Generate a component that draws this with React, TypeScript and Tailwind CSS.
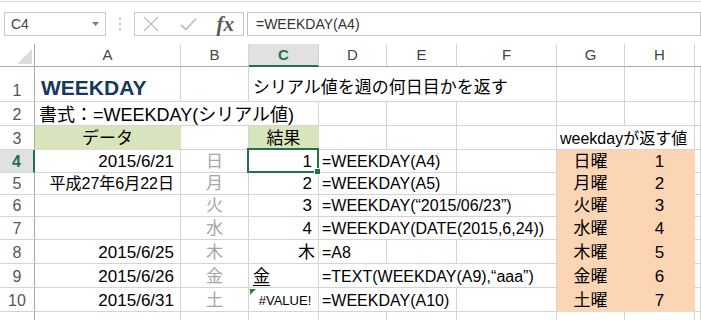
import type { ReactNode } from 'react';

type Fill = 'green' | 'orange';

function Cell({
  w,
  children,
  open,
  fill,
  className = '',
}: {
  w: string;
  children?: ReactNode;
  open?: boolean;
  fill?: Fill;
  className?: string;
}) {
  const tone =
    fill === 'green'
      ? 'bg-[#d8e4bc] border-[#d8e4bc]'
      : fill === 'orange'
        ? 'bg-[#fcd5b4] border-[#fcd5b4]'
        : 'border-[#d4d4d4]';
  return (
    <div
      className={`${w} relative flex h-full shrink-0 items-end whitespace-nowrap border-b text-[16px] leading-[20px] ${open ? 'z-10' : 'border-r'} ${tone} ${className}`}
    >
      {children}
    </div>
  );
}

function Row({ n, h, active, children }: { n?: number; h: string; active?: boolean; children: ReactNode }) {
  return (
    <div className={`flex ${h}`}>
      <div
        className={`flex w-[35px] shrink-0 items-end justify-center border-b border-b-[#d4d4d4] text-[16px] leading-[20px] ${
          active
            ? 'border-r-2 border-r-[#217346] bg-[#e1e1e1] font-bold text-[#217346]'
            : 'border-r border-r-[#ababab] text-[#555]'
        }`}
      >
        {n}
      </div>
      {children}
    </div>
  );
}

const day = 'justify-center text-[17px] text-[#a6a6a6]';
const num = 'justify-end pr-[6px] text-[17px]';

export default function App() {
  return (
    <div className="h-[320px] w-[701px] overflow-hidden bg-white font-['Liberation_Sans','Noto_Sans_CJK_JP',sans-serif] text-black">
      {/* formula bar */}
      <div className="h-[44px]">
        <div className="h-[1px]" />
        <div className="h-[1px] bg-[#d6d6d6]" />
        <div className="mt-[10px] flex h-[24px] items-stretch">
          <div className="ml-[4px] flex w-[103px] items-center justify-between border border-[#c6c6c6] pl-[6px] pr-[6px] text-[14px] text-[#444]">
            <span>C4</span>
            <svg width="7" height="4" viewBox="0 0 7 4">
              <path d="M0 0h7L3.5 4z" fill="#7a7a7a" />
            </svg>
          </div>
          <div className="flex w-[29px] flex-col items-center justify-center gap-[3px]">
            <span className="h-[2px] w-[2px] bg-[#c4c4c4]" />
            <span className="h-[2px] w-[2px] bg-[#c4c4c4]" />
            <span className="h-[2px] w-[2px] bg-[#c4c4c4]" />
          </div>
          <div className="flex w-[111px] items-center border border-[#c6c6c6]">
            <svg className="ml-[8px]" width="16" height="16" viewBox="0 0 16 16">
              <path d="M1 1L15 15M15 1L1 15" stroke="#c0c0c0" strokeWidth="1.4" />
            </svg>
            <svg className="ml-[21px]" width="17" height="14" viewBox="0 0 17 14">
              <path d="M1 8L6 12.5L16 1.5" stroke="#c0c0c0" strokeWidth="1.8" fill="none" />
            </svg>
            <span className="ml-[19px] font-['Liberation_Serif',serif] text-[21px] font-bold italic leading-none text-[#5a5a5a]">
              fx
            </span>
          </div>
          <div className="ml-[3px] flex w-[460px] items-center border border-[#c6c6c6] pl-[8px] text-[14px] text-[#333]">
            =WEEKDAY(A4)
          </div>
        </div>
      </div>

      {/* column headers */}
      <div className="flex h-[23px] text-[15px] leading-[20px] text-[#444]">
        <div className="flex w-[35px] shrink-0 items-end justify-end border-b border-r border-[#ababab] pb-[2px] pr-[2px]">
          <svg width="15" height="15" viewBox="0 0 15 15">
            <path d="M15 0V15H0z" fill="#dcdcdc" />
          </svg>
        </div>
        <div className="flex w-[146px] shrink-0 items-center justify-center border-b border-r border-b-[#ababab] border-r-[#d4d4d4]">A</div>
        <div className="flex w-[68px] shrink-0 items-center justify-center border-b border-r border-b-[#ababab] border-r-[#d4d4d4]">B</div>
        <div className="flex w-[70px] shrink-0 items-center justify-center border-b-2 border-r border-b-[#217346] border-r-[#d4d4d4] bg-[#e1e1e1] font-bold text-[#217346]">C</div>
        <div className="flex w-[68px] shrink-0 items-center justify-center border-b border-r border-b-[#ababab] border-r-[#d4d4d4]">D</div>
        <div className="flex w-[70px] shrink-0 items-center justify-center border-b border-r border-b-[#ababab] border-r-[#d4d4d4]">E</div>
        <div className="flex w-[100px] shrink-0 items-center justify-center border-b border-r border-b-[#ababab] border-r-[#d4d4d4]">F</div>
        <div className="flex w-[68px] shrink-0 items-center justify-center border-b border-r border-b-[#ababab] border-r-[#d4d4d4]">G</div>
        <div className="flex w-[70px] shrink-0 items-center justify-center border-b border-r border-b-[#ababab] border-r-[#d4d4d4]">H</div>
        <div className="flex-1 border-b border-[#ababab]" />
      </div>

      <Row n={1} h="h-[35px]">
        <Cell w="w-[146px]" className="pb-[3px] pl-[6px] text-[21px] font-bold text-[#17375e]">WEEKDAY</Cell>
        <Cell w="w-[68px]" />
        <Cell w="w-[70px]" open className="pb-[3px] pl-[4px] text-[17px]">
          <span>シリアル値を週の何日目かを返す</span>
        </Cell>
        <Cell w="w-[68px]" open />
        <Cell w="w-[70px]" open />
        <Cell w="w-[100px]" />
        <Cell w="w-[68px]" />
        <Cell w="w-[70px]" />
        <Cell w="flex-1" />
      </Row>

      <Row n={2} h="h-[24px]">
        <Cell w="w-[146px]" open className="pl-[4px] text-[18px]">
          <span>書式：=WEEKDAY(シリアル値)</span>
        </Cell>
        <Cell w="w-[68px]" open />
        <Cell w="w-[70px]" />
        <Cell w="w-[68px]" />
        <Cell w="w-[70px]" />
        <Cell w="w-[100px]" />
        <Cell w="w-[68px]" />
        <Cell w="w-[70px]" />
        <Cell w="flex-1" />
      </Row>

      <Row n={3} h="h-[24px]">
        <Cell w="w-[146px]" fill="green" className="justify-center text-[17px]">データ</Cell>
        <Cell w="w-[68px]" />
        <Cell w="w-[70px]" fill="green" className="justify-center text-[17px]">結果</Cell>
        <Cell w="w-[68px]" />
        <Cell w="w-[70px]" />
        <Cell w="w-[100px]" />
        <Cell w="w-[68px]" open className="pl-[3px]">
          <span>weekdayが返す値</span>
        </Cell>
        <Cell w="w-[70px]" />
        <Cell w="flex-1" />
      </Row>

      <Row n={4} h="h-[23px]" active>
        <Cell w="w-[146px]" className={num}>2015/6/21</Cell>
        <Cell w="w-[68px]" className={day}>日</Cell>
        <Cell w="w-[70px]" className={num}>
          1
          <div className="absolute bottom-[-1px] left-[-2px] right-[-1px] top-[-2px] z-20 border-2 border-[#217346]" />
          <div className="absolute bottom-[-3px] right-[-3px] z-30 h-[7px] w-[7px] border border-white bg-[#217346]" />
        </Cell>
        <Cell w="w-[68px]" open className="pl-[3px]">
          <span>=WEEKDAY(A4)</span>
        </Cell>
        <Cell w="w-[70px]" />
        <Cell w="w-[100px]" />
        <Cell w="w-[68px]" fill="orange" className="justify-center text-[17px]">日曜</Cell>
        <Cell w="w-[70px]" fill="orange" className="justify-center text-[17px]">1</Cell>
        <Cell w="flex-1" />
      </Row>

      <Row n={5} h="h-[22px]">
        <Cell w="w-[146px]" className="justify-end pr-[6px]">平成27年6月22日</Cell>
        <Cell w="w-[68px]" className={day}>月</Cell>
        <Cell w="w-[70px]" className={num}>2</Cell>
        <Cell w="w-[68px]" open className="pl-[3px]">
          <span>=WEEKDAY(A5)</span>
        </Cell>
        <Cell w="w-[70px]" />
        <Cell w="w-[100px]" />
        <Cell w="w-[68px]" fill="orange" className="justify-center text-[17px]">月曜</Cell>
        <Cell w="w-[70px]" fill="orange" className="justify-center text-[17px]">2</Cell>
        <Cell w="flex-1" />
      </Row>

      <Row n={6} h="h-[22px]">
        <Cell w="w-[146px]" />
        <Cell w="w-[68px]" className={day}>火</Cell>
        <Cell w="w-[70px]" className={num}>3</Cell>
        <Cell w="w-[68px]" open className="pl-[3px]">
          <span>=WEEKDAY(“2015/06/23”)</span>
        </Cell>
        <Cell w="w-[70px]" open />
        <Cell w="w-[100px]" />
        <Cell w="w-[68px]" fill="orange" className="justify-center text-[17px]">火曜</Cell>
        <Cell w="w-[70px]" fill="orange" className="justify-center text-[17px]">3</Cell>
        <Cell w="flex-1" />
      </Row>

      <Row n={7} h="h-[23px]">
        <Cell w="w-[146px]" />
        <Cell w="w-[68px]" className={day}>水</Cell>
        <Cell w="w-[70px]" className={num}>4</Cell>
        <Cell w="w-[68px]" open className="pl-[3px]">
          <span>=WEEKDAY(DATE(2015,6,24))</span>
        </Cell>
        <Cell w="w-[70px]" open />
        <Cell w="w-[100px]" />
        <Cell w="w-[68px]" fill="orange" className="justify-center text-[17px]">水曜</Cell>
        <Cell w="w-[70px]" fill="orange" className="justify-center text-[17px]">4</Cell>
        <Cell w="flex-1" />
      </Row>

      <Row n={8} h="h-[24px]">
        <Cell w="w-[146px]" className={num}>2015/6/25</Cell>
        <Cell w="w-[68px]" className={day}>木</Cell>
        <Cell w="w-[70px]" className="justify-end pr-[3px] text-[17px]">木</Cell>
        <Cell w="w-[68px]" className="pl-[3px]">=A8</Cell>
        <Cell w="w-[70px]" />
        <Cell w="w-[100px]" />
        <Cell w="w-[68px]" fill="orange" className="justify-center text-[17px]">木曜</Cell>
        <Cell w="w-[70px]" fill="orange" className="justify-center text-[17px]">5</Cell>
        <Cell w="flex-1" />
      </Row>

      <Row n={9} h="h-[24px]">
        <Cell w="w-[146px]" className={num}>2015/6/26</Cell>
        <Cell w="w-[68px]" className={day}>金</Cell>
        <Cell w="w-[70px]" className="pl-[4px] text-[17px]">
          <span className="underline decoration-1 underline-offset-[3px]">金</span>
        </Cell>
        <Cell w="w-[68px]" open className="pl-[3px]">
          <span>=TEXT(WEEKDAY(A9),“aaa”)</span>
        </Cell>
        <Cell w="w-[70px]" open />
        <Cell w="w-[100px]" />
        <Cell w="w-[68px]" fill="orange" className="justify-center text-[17px]">金曜</Cell>
        <Cell w="w-[70px]" fill="orange" className="justify-center text-[17px]">6</Cell>
        <Cell w="flex-1" />
      </Row>

      <Row n={10} h="h-[24px]">
        <Cell w="w-[146px]" className={num}>2015/6/31</Cell>
        <Cell w="w-[68px]" className={day}>土</Cell>
        <Cell w="w-[70px]" className="justify-center pb-[2px] pl-[3px]">
          <svg className="absolute left-[1px] top-[1px]" width="6" height="6" viewBox="0 0 6 6">
            <path d="M0 0H6L0 6z" fill="#1f8a3c" />
          </svg>
          <span className="text-[13px] leading-[16px]">#VALUE!</span>
        </Cell>
        <Cell w="w-[68px]" open className="pl-[3px]">
          <span>=WEEKDAY(A10)</span>
        </Cell>
        <Cell w="w-[70px]" />
        <Cell w="w-[100px]" />
        <Cell w="w-[68px]" fill="orange" className="justify-center text-[17px]">土曜</Cell>
        <Cell w="w-[70px]" fill="orange" className="justify-center text-[17px]">7</Cell>
        <Cell w="flex-1" />
      </Row>

      <Row h="h-[24px]">
        <Cell w="w-[146px]" />
        <Cell w="w-[68px]" />
        <Cell w="w-[70px]" />
        <Cell w="w-[68px]" />
        <Cell w="w-[70px]" />
        <Cell w="w-[100px]" />
        <Cell w="w-[68px]" />
        <Cell w="w-[70px]" />
        <Cell w="flex-1" />
      </Row>
    </div>
  );
}
